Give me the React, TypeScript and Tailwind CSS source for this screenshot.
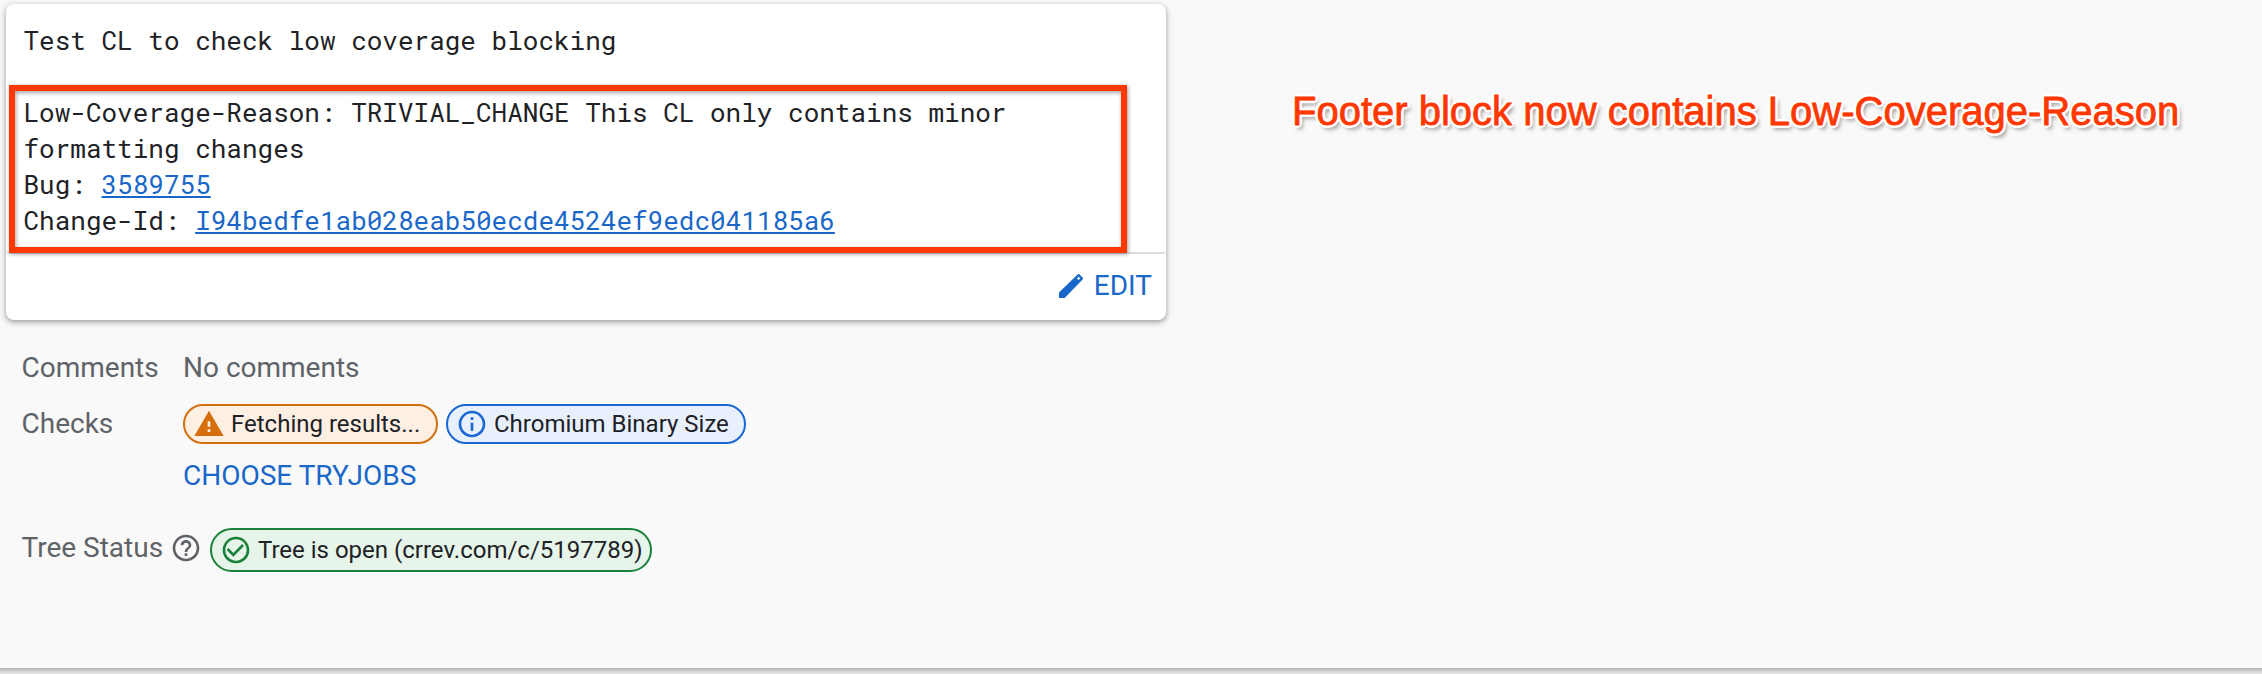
import type { ReactNode } from "react";

function Icon({ d, className }: { d: string; className: string }) {
  return (
    <svg viewBox="0 0 24 24" className={`size-8 shrink-0 fill-current ${className}`}>
      <path d={d} fillRule="evenodd" />
    </svg>
  );
}

const PENCIL =
  "M3 16.8V21h4.2L20.71 7.04c.39-.39.39-1.02 0-1.41l-2.34-2.34c-.39-.39-1.02-.39-1.41 0zM17.7 5.1l1.2 1.2-1.2 1.2-1.2-1.2z";
const WARNING = "M1 21h22L12 2 1 21zm12-3h-2v-2h2v2zm0-4h-2v-4h2v4z";
const INFO =
  "M11 7h2v2h-2zm0 4h2v6h-2zm1-9C6.48 2 2 6.48 2 12s4.48 10 10 10 10-4.48 10-10S17.52 2 12 2zm0 18c-4.41 0-8-3.59-8-8s3.59-8 8-8 8 3.59 8 8-3.59 8-8 8z";
const HELP =
  "M11 18h2v-2h-2v2zm1-16C6.48 2 2 6.48 2 12s4.48 10 10 10 10-4.48 10-10S17.52 2 12 2zm0 18c-4.41 0-8-3.59-8-8s3.59-8 8-8 8 3.59 8 8-3.59 8-8 8zm0-14c-2.21 0-4 1.79-4 4h2c0-1.1.9-2 2-2s2 .9 2 2c0 2-3 1.75-3 5h2c0-2.25 3-2.5 3-5 0-2.21-1.79-4-4-4z";
const CHECK =
  "M16.59 7.58L10 14.17l-3.59-3.58L5 12l5 5 8-8zM12 2C6.48 2 2 6.48 2 12s4.48 10 10 10 10-4.48 10-10S17.52 2 12 2zm0 18c-4.42 0-8-3.58-8-8s3.58-8 8-8 8 3.58 8 8-3.58 8-8 8z";

function Chip({ icon, iconClass, className, children }: { icon: string; iconClass: string; className: string; children: ReactNode }) {
  return (
    <div className={`flex items-center rounded-full border-2 pl-2 text-2xl whitespace-nowrap text-[#202124] ${className}`}>
      <Icon d={icon} className={iconClass} />
      <span className="ml-1.5">{children}</span>
    </div>
  );
}

function MessageLink({ children }: { children: string }) {
  return <a className="text-[#1967c8] underline decoration-2 underline-offset-2">{children}</a>;
}

export default function App() {
  return (
    <div className="relative flex h-[674px] w-[2262px] flex-col overflow-hidden bg-[#f9f9f9] font-[Roboto,sans-serif] text-[28px] text-[#5f6368]">
      <div className="flex h-[664px] shrink-0 items-start">
        <div className="flex w-[1166px] flex-col pt-1 pl-1.5">
          <section className="relative h-[316px] rounded-lg bg-white shadow-[0_2px_4px_rgba(60,64,67,0.35),0_2px_6px_2px_rgba(60,64,67,0.15)]">
            <div className="h-[250px] rounded-t-lg rounded-b-sm border-b-2 border-[#dadce0] pt-[18px] pl-[17.5px] font-['Roboto_Mono','Liberation_Mono',monospace] text-[26px] leading-9 text-[#202124]">
              <p className="mb-9">Test CL to check low coverage blocking</p>
              <p>Low-Coverage-Reason: TRIVIAL_CHANGE This CL only contains minor</p>
              <p>formatting changes</p>
              <p>Bug: <MessageLink>3589755</MessageLink></p>
              <p>Change-Id: <MessageLink>I94bedfe1ab028eab50ecde4524ef9edc041185a6</MessageLink></p>
            </div>
            <button className="ml-auto flex h-[64px] items-center pr-3.5 text-[#1967c8]">
              <Icon d={PENCIL} className="" />
              <span className="ml-[7px]">EDIT</span>
            </button>
            <div className="absolute top-[81px] left-[3px] h-[168px] w-[1118px] border-6 border-[#ff3700] shadow-[1px_1px_4px_rgba(0,0,0,0.4),inset_1px_2px_4px_rgba(0,0,0,0.35)]" />
          </section>
          <div className="mt-[33px] flex h-[30px] items-center pl-[15.5px]">
            <span className="w-[161.5px]">Comments</span>
            <span>No comments</span>
          </div>
          <div className="mt-[21px] flex h-10 items-center pl-[15.5px]">
            <span className="w-[161.5px]">Checks</span>
            <Chip icon={WARNING} iconClass="text-[#d56e0c]" className="h-10 w-[255px] border-[#d56e0c] bg-[#feefe3]">Fetching results...</Chip>
            <Chip icon={INFO} iconClass="text-[#1967d2]" className="ml-2 h-10 w-[300px] border-[#1967d2] bg-[#e8f0fe]">Chromium Binary Size</Chip>
          </div>
          <div className="mt-[17px] flex h-[30px] items-center pl-[177px] text-[#1967c8]">CHOOSE TRYJOBS</div>
          <div className="mt-[37px] flex h-11 items-center pl-[15.5px]">
            <div className="flex w-[188.5px] items-center justify-between pr-2 pb-1">
              <span className="whitespace-nowrap">Tree Status</span>
              <Icon d={HELP} className="" />
            </div>
            <Chip icon={CHECK} iconClass="text-[#188038]" className="h-11 w-[442px] border-[#188038] bg-[#e6f4ea]">Tree is open (crrev.com/c/5197789)</Chip>
          </div>
        </div>
        <h1 className="mt-[88px] ml-[126px] font-['Liberation_Sans',Arial,sans-serif] text-[40px] leading-[46px] whitespace-nowrap text-[#ff3700] [-webkit-text-stroke:0.8px_#ff3700] [text-shadow:3px_0_0_white,-3px_0_0_white,0_3px_0_white,0_-3px_0_white,2px_2px_0_white,-2px_2px_0_white,2px_-2px_0_white,-2px_-2px_0_white,3px_4px_4px_rgba(0,0,0,0.5)]">
          Footer block now contains Low-Coverage-Reason
        </h1>
      </div>
      <div className="mt-1 h-1.5 shrink-0 bg-linear-to-b from-[#b0b3b5] to-[#e8e9ea]" />
    </div>
  );
}
